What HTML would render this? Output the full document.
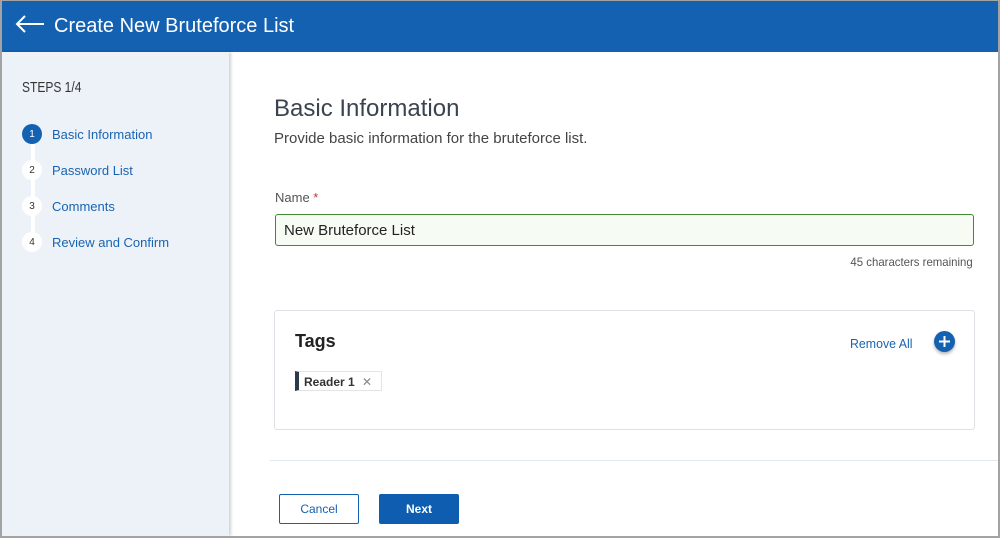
<!DOCTYPE html>
<html><head><style>
*{margin:0;padding:0;box-sizing:border-box}
body{width:1000px;height:538px;overflow:hidden;font-family:"Liberation Sans",Arial,sans-serif;background:#fff;position:relative}
.frame{position:absolute;left:0;top:0;width:1000px;height:538px;border:2px solid #a3a3a3;border-top-width:1px;border-bottom-width:2px}
.hdr{position:absolute;left:2px;top:1px;width:996px;height:51px;background:#1461b1;color:#fff}
.hdr .t{position:absolute;left:52px;top:14px;font-size:20px}
.side{position:absolute;left:2px;top:52px;width:227px;height:484px;background:#edf2f9;box-shadow:2px 0 3px rgba(0,0,0,.18)}
.steps{position:absolute;left:20px;top:27px;font-size:15px;color:#333;transform:scaleX(.8);transform-origin:left}
.line{position:absolute;left:29px;top:82px;width:4px;height:108px;background:#fff}
.st{position:absolute;left:20px;width:20px;height:20px;border-radius:50%;background:#fff;color:#333;font-size:10px;display:flex;align-items:center;justify-content:center}
.st.a{background:#1461b1;color:#fff}
.sl{position:absolute;left:50px;font-size:13px;color:#1a63b0}
h1{position:absolute;left:274px;top:95px;font-size:24px;font-weight:normal;color:#3a4450}
.sub{position:absolute;left:274px;top:130px;font-size:15px;color:#444}
.lbl{position:absolute;left:275px;top:190px;font-size:13px;color:#555}
.inp{position:absolute;left:275px;top:214px;width:699px;height:32px;border:1px solid #3f8a33;border-radius:3px;background:#f6fcf4;font-size:15px;color:#222;padding:7px 8px}
.rem{position:absolute;right:27px;top:255px;font-size:12px;color:#555;transform:scaleX(.95);transform-origin:right}
.card{position:absolute;left:274px;top:310px;width:701px;height:120px;border:1px solid #dde1e5;border-radius:3px}
.tags{position:absolute;left:20px;top:20px;font-size:18px;font-weight:bold;color:#222}
.ra{position:absolute;left:575px;top:25px;font-size:13px;color:#1a63b0;transform:scaleX(.95);transform-origin:left}
.plus{position:absolute;left:659px;top:20px;width:21px;height:21px;border-radius:50%;background:#1461b1;box-shadow:0 2px 3px rgba(0,0,0,.3)}
.chip{position:absolute;left:20px;top:60px;width:87px;height:20px;border:1px solid #e3e3e3;border-left:4px solid #2a3a48;font-size:12px;font-weight:bold;color:#333;padding:3px 5px}
.hr{position:absolute;left:270px;top:460px;width:728px;height:1px;background:#e3e8ee}
.btn{position:absolute;top:494px;height:30px;font-size:12px;display:flex;align-items:center;justify-content:center;border-radius:2px}
</style></head><body>
<div class="hdr"><svg style="position:absolute;left:12px;top:13px" width="32" height="20" viewBox="0 0 32 20"><path d="M30 10H3M11 2L3 10l8 8" stroke="#fff" stroke-width="2" fill="none"/></svg><div class="t">Create New Bruteforce List</div></div>
<div class="side">
<div class="steps">STEPS 1/4</div>
<div class="line"></div>
<div class="st a" style="top:72px">1</div><div class="sl" style="top:75px">Basic Information</div>
<div class="st" style="top:108px">2</div><div class="sl" style="top:111px">Password List</div>
<div class="st" style="top:144px">3</div><div class="sl" style="top:147px">Comments</div>
<div class="st" style="top:180px">4</div><div class="sl" style="top:183px">Review and Confirm</div>
</div>
<h1>Basic Information</h1>
<div class="sub">Provide basic information for the bruteforce list.</div>
<div class="lbl">Name <span style="color:#c0392b">*</span></div>
<div class="inp">New Bruteforce List</div>
<div class="rem">45 characters remaining</div>
<div class="card">
<div class="tags">Tags</div>
<div class="ra">Remove All</div>
<div class="plus"><svg width="21" height="21" viewBox="0 0 21 21"><path d="M10.5 5v11M5 10.5h11" stroke="#fff" stroke-width="2"/></svg></div>
<div class="chip">Reader 1 <span style="font-weight:normal;color:#888;margin-left:4px">✕</span></div>
</div>
<div class="hr"></div>
<div class="btn" style="left:279px;width:80px;border:1px solid #1461b1;color:#1461b1;background:#fff">Cancel</div>
<div class="btn" style="left:379px;width:80px;background:#0f5db0;color:#fff;font-weight:bold">Next</div>
<div class="frame"></div>
</body></html>
